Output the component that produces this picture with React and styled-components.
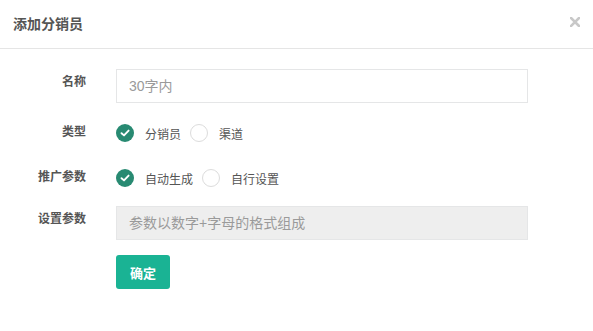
import React, { useState } from 'react';
import styled, { createGlobalStyle } from 'styled-components';

const GlobalStyle = createGlobalStyle`
body{
  margin:0;
  background:#fff;
  font-family: "Liberation Sans", "Noto Sans CJK SC", sans-serif;
}
`

function Radio({ checked, label, onClick }) {
  return (
    <RadioItem onClick={onClick}>
      <Circle $checked={checked}>
        {checked && (
          <svg width="10" height="8" viewBox="0 0 10 8">
            <path d="M1.5 4.2 L4 6.4 L8.6 1.6" fill="none" stroke="#fff" strokeWidth="1.9" strokeLinecap="round" strokeLinejoin="round" />
          </svg>
        )}
      </Circle>
      <RadioText>{label}</RadioText>
    </RadioItem>
  )
}

function App() {
  const [type, setType] = useState(0);
  const [gen, setGen] = useState(0);
  return (
    <Modal>
      <GlobalStyle />
      <Header>
        <Title>添加分销员</Title>
        <CloseBtn>
          <svg width="10" height="10" viewBox="0 0 10 10">
            <path d="M1 1 L9 9 M9 1 L1 9" stroke="#c8c8c8" strokeWidth="2.6" strokeLinecap="square" />
          </svg>
        </CloseBtn>
      </Header>
      <Body>
        <Row>
          <Label $top>名称</Label>
          <Input placeholder="30字内" />
        </Row>
        <Row>
          <Label>类型</Label>
          <Radios>
            <Radio checked={type === 0} label="分销员" onClick={() => setType(0)} />
            <Radio checked={type === 1} label="渠道" onClick={() => setType(1)} />
          </Radios>
        </Row>
        <Row>
          <Label>推广参数</Label>
          <Radios>
            <Radio checked={gen === 0} label="自动生成" onClick={() => setGen(0)} />
            <Radio checked={gen === 1} label="自行设置" onClick={() => setGen(1)} />
          </Radios>
        </Row>
        <Row>
          <Label $top>设置参数</Label>
          <Input placeholder="参数以数字+字母的格式组成" disabled />
        </Row>
        <Row>
          <Label />
          <Button>确定</Button>
        </Row>
      </Body>
    </Modal>
  )
}

export default App;

const Modal = styled.div`
width:593px;
height:331px;
background:#fff;
`
const Header = styled.div`
display:flex;
align-items:center;
justify-content:space-between;
height:48px;
padding:0 13px 0 13px;
border-bottom:1px solid #e5e5e5;
box-sizing:content-box;
`
const Title = styled.div`
font-size:14px;
font-weight:bold;
color:#555;
margin-top:-3px;
`
const CloseBtn = styled.div`
display:flex;
margin-right:0;
margin-top:-5px;
cursor:pointer;
`
const Body = styled.div`
display:flex;
flex-direction:column;
gap:11px;
padding:20px 0 0 0;
`
const Row = styled.div`
display:flex;
align-items:center;
min-height:34px;
&:first-child{ margin-bottom:2px; }
&:last-child{ margin-top:4px; }
`
const Label = styled.div`
width:86px;
flex-shrink:0;
margin-right:30px;
text-align:right;
font-size:12px;
font-weight:bold;
color:#555;
line-height:18px;
padding-bottom:${props => props.$top ? '8px' : '2px'};
`
const Input = styled.input`
width:412px;
height:34px;
box-sizing:border-box;
border:1px solid #e5e6e7;
background:${props => props.disabled ? '#eee' : '#fff'};
padding:0 12px;
font-size:14px;
font-family:"Liberation Sans", "Noto Sans CJK SC", sans-serif;
color:#555;
outline:none;
&::placeholder{ color:#9a9a9a; }
`
const Radios = styled.div`
display:flex;
align-items:center;
gap:9px;
`
const RadioItem = styled.label`
display:flex;
align-items:center;
cursor:pointer;
`
const Circle = styled.span`
display:flex;
align-items:center;
justify-content:center;
width:18px;
height:18px;
box-sizing:border-box;
border-radius:50%;
border:${props => props.$checked ? 'none' : '1px solid #dcdcdc'};
background:${props => props.$checked ? '#288a72' : '#fff'};
`
const RadioText = styled.span`
margin-left:11px;
font-size:12px;
color:#555;
`
const Button = styled.button`
width:54px;
height:34px;
border:none;
border-radius:3px;
background:#1ab394;
color:#fff;
font-size:13px;
font-weight:bold;
font-family:"Liberation Sans", "Noto Sans CJK SC", sans-serif;
cursor:pointer;
`
